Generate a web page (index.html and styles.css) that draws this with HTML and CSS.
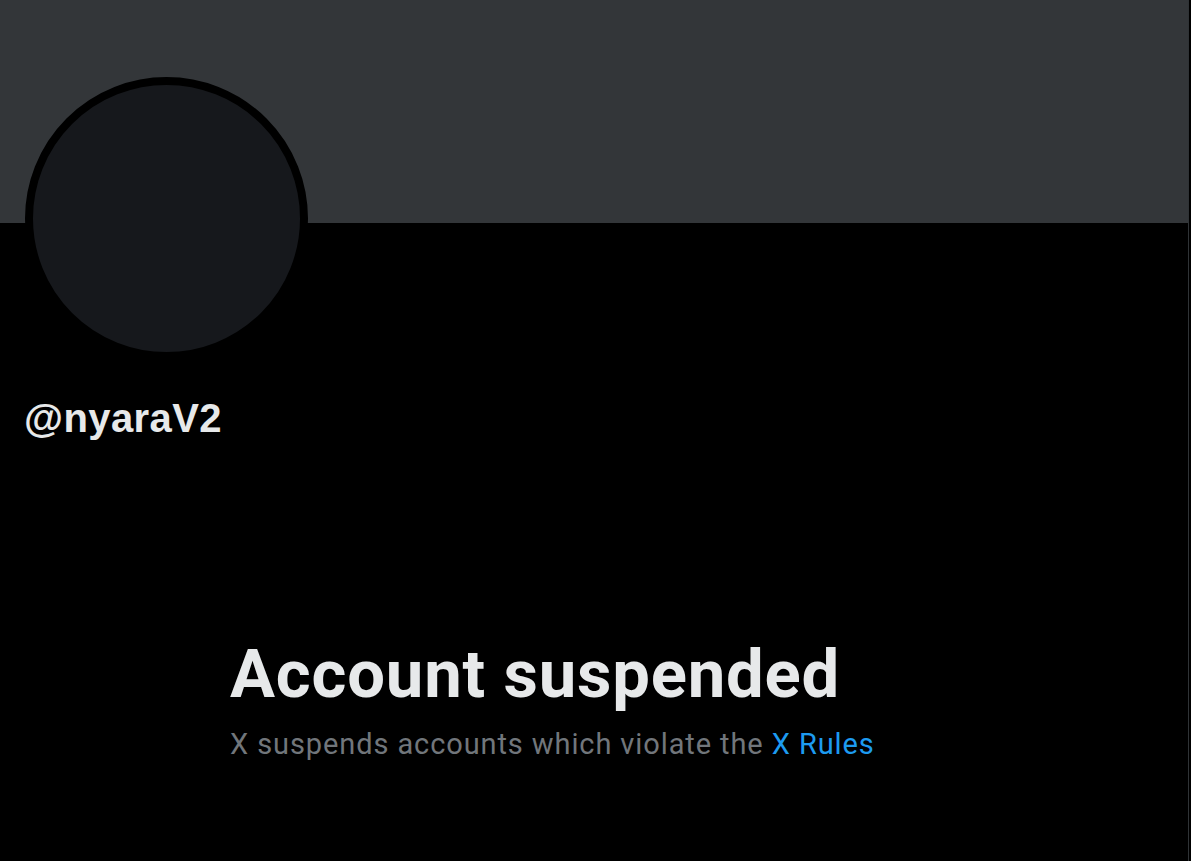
FILE: index.html
```html
<!DOCTYPE html>
<html lang="en">
<head>
<meta charset="utf-8">
<title>@nyaraV2 / X</title>
<link rel="stylesheet" href="styles.css">
</head>
<body>
<main class="column">
  <section class="profile-header">
    <div class="banner"></div>
    <div class="avatar"></div>
    <div class="identity">
      <h2 class="handle">@nyaraV2</h2>
    </div>
  </section>
  <section class="empty-state">
    <h1 class="empty-title">Account suspended</h1>
    <p class="empty-text">X suspends accounts which violate the <a class="link" href="#">X Rules</a></p>
  </section>
</main>
</body>
</html>
```

FILE: styles.css
```css
html, body {
  margin: 0;
  padding: 0;
  background: #000;
  height: 100%;
}
body {
  font-family: Roboto, "Liberation Sans", Arial, sans-serif;
  color: #e7e9ea;
  overflow: hidden;
}
.column {
  width: 1189px;
  min-height: 100%;
  border-right: 1px solid #2f3336;
  box-sizing: border-box;
}
.profile-header {
  position: relative;
}
.banner {
  height: 223px;
  background: #333639;
}
.avatar {
  position: absolute;
  left: 25px;
  top: 77px;
  width: 267px;
  height: 267px;
  border-radius: 50%;
  background: #16181c;
  border: 8px solid #000;
}
.identity {
  padding: 171px 0 0 24px;
}
.handle {
  margin: 0;
  font-family: "Liberation Sans", Arial, sans-serif;
  font-weight: 700;
  font-size: 40px;
  line-height: 48px;
  letter-spacing: 0.4px;
  color: #e7e9ea;
}
.empty-state {
  padding: 194px 0 0 230px;
}
.empty-title {
  margin: 0;
  font-weight: 700;
  font-size: 67px;
  line-height: 76px;
  letter-spacing: 0.8px;
  color: #e7e9ea;
}
.empty-text {
  margin: 12px 0 0;
  font-size: 29px;
  line-height: 40px;
  letter-spacing: 0.9px;
  color: #71767b;
}
.link {
  color: #1d9bf0;
  text-decoration: none;
}
```
